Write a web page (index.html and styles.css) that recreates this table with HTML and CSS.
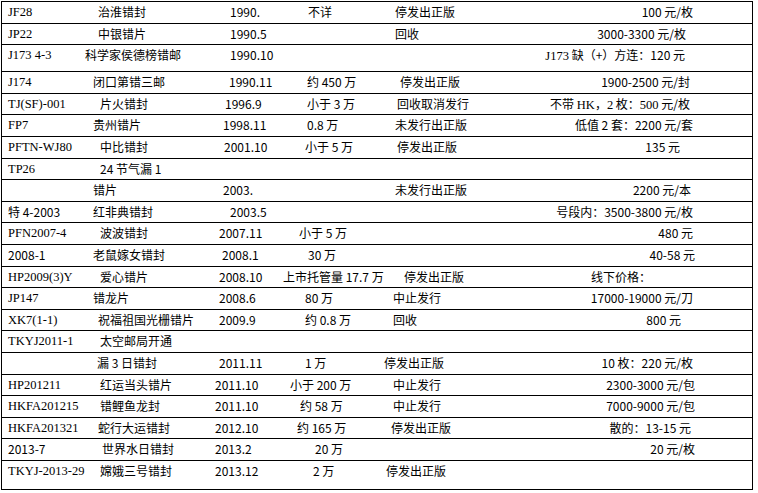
FILE: index.html
```html
<!DOCTYPE html>
<html lang="zh-CN">
<head>
<meta charset="utf-8">
<title>错票一览</title>
<link rel="stylesheet" href="styles.css">
</head>
<body>
<div class="sheet">
  <div class="row">
    <div class="cell c1 serif">JF28</div><div class="cell in14">治淮错封</div><div class="cell in16">1990.</div><div class="cell in26">不详</div><div class="cell in15">停发出正版</div><div class="cell price">100 元/枚</div>
  </div>
  <div class="row">
    <div class="cell c1 serif">JP22</div><div class="cell in14">中银错片</div><div class="cell in16">1990.5</div><div class="cell"></div><div class="cell in15">回收</div><div class="cell price pr66">3000-3300 元/枚</div>
  </div>
  <div class="row tall">
    <div class="cell c1 serif">J173 4-3</div><div class="cell in1">科学家侯德榜错邮</div><div class="cell in16">1990.10</div><div class="cell"></div><div class="cell"></div><div class="cell price pr67"><span class="serif">J173</span> 缺（+）方连：120 元</div>
  </div>
  <div class="row">
    <div class="cell c1 serif">J174</div><div class="cell in9">闭口第错三邮</div><div class="cell in15">1990.11</div><div class="cell in25">约 450 万</div><div class="cell in20">停发出正版</div><div class="cell price pr62">1900-2500 元/封</div>
  </div>
  <div class="row">
    <div class="cell c1 serif">TJ(SF)-001</div><div class="cell in16">片火错封</div><div class="cell in11">1996.9</div><div class="cell in25">小于 3 万</div><div class="cell in17">回收取消发行</div><div class="cell price pr62">不带 <span class="serif">HK</span>，<span class="serif">2</span> 枚：<span class="serif">500</span> 元/枚</div>
  </div>
  <div class="row">
    <div class="cell c1 serif">FP7</div><div class="cell in9">贵州错片</div><div class="cell in9">1998.11</div><div class="cell in25">0.8 万</div><div class="cell in15">未发行出正版</div><div class="cell price">低值 2 套：2200 元/套</div>
  </div>
  <div class="row">
    <div class="cell c1 serif">PFTN-WJ80</div><div class="cell in16">中比错封</div><div class="cell in10">2001.10</div><div class="cell in23">小于 5 万</div><div class="cell in17">停发出正版</div><div class="cell price pr72">135 元</div>
  </div>
  <div class="row">
    <div class="cell c1 serif">TP26</div><div class="cell in16">24 节气漏 1</div><div class="cell"></div><div class="cell"></div><div class="cell"></div><div class="cell"></div>
  </div>
  <div class="row">
    <div class="cell c1"></div><div class="cell in9">错片</div><div class="cell in9">2003.</div><div class="cell"></div><div class="cell in15">未发行出正版</div><div class="cell price pr61">2200 元/本</div>
  </div>
  <div class="row">
    <div class="cell c1">特 4-2003</div><div class="cell in9">红非典错封</div><div class="cell in16">2003.5</div><div class="cell"></div><div class="cell"></div><div class="cell price">号段内：3500-3800 元/枚</div>
  </div>
  <div class="row">
    <div class="cell c1 serif">PFN2007-4</div><div class="cell in16">波波错封</div><div class="cell in5">2007.11</div><div class="cell in17">小于 5 万</div><div class="cell"></div><div class="cell price">480 元</div>
  </div>
  <div class="row">
    <div class="cell c1">2008-1</div><div class="cell in9">老鼠嫁女错封</div><div class="cell in8">2008.1</div><div class="cell in26">30 万</div><div class="cell"></div><div class="cell price pr57">40-58 元</div>
  </div>
  <div class="row">
    <div class="cell c1 serif">HP2009(3)Y</div><div class="cell in16">爱心错片</div><div class="cell in5">2008.10</div><div class="cell in1">上市托管量 17.7 万</div><div class="cell in24">停发出正版</div><div class="cell note">线下价格：</div>
  </div>
  <div class="row">
    <div class="cell c1 serif">JP147</div><div class="cell in9">错龙片</div><div class="cell in5">2008.6</div><div class="cell in23">80 万</div><div class="cell in13">中止发行</div><div class="cell price">17000-19000 元/刀</div>
  </div>
  <div class="row">
    <div class="cell c1 serif">XK7(1-1)</div><div class="cell in14">祝福祖国光栅错片</div><div class="cell in5">2009.9</div><div class="cell in23">约 0.8 万</div><div class="cell in13">回收</div><div class="cell price pr71">800 元</div>
  </div>
  <div class="row">
    <div class="cell c1 serif">TKYJ2011-1</div><div class="cell in16">太空邮局开通</div><div class="cell"></div><div class="cell"></div><div class="cell"></div><div class="cell"></div>
  </div>
  <div class="row">
    <div class="cell c1"></div><div class="cell in13">漏 3 日错封</div><div class="cell in5">2011.11</div><div class="cell in23">1 万</div><div class="cell in4">停发出正版</div><div class="cell price">10 枚：220 元/枚</div>
  </div>
  <div class="row">
    <div class="cell c1 serif">HP201211</div><div class="cell in16">红运当头错片</div><div class="cell in1">2011.10</div><div class="cell in8">小于 200 万</div><div class="cell in13">中止发行</div><div class="cell price pr57">2300-3000 元/包</div>
  </div>
  <div class="row">
    <div class="cell c1 serif">HKFA201215</div><div class="cell in16">错鲤鱼龙封</div><div class="cell in1">2011.10</div><div class="cell in18">约 58 万</div><div class="cell in13">中止发行</div><div class="cell price pr57">7000-9000 元/包</div>
  </div>
  <div class="row">
    <div class="cell c1 serif">HKFA201321</div><div class="cell in14">蛇行大运错封</div><div class="cell in1">2012.10</div><div class="cell in15">约 165 万</div><div class="cell in11">停发出正版</div><div class="cell price pr61">散的：13-15 元</div>
  </div>
  <div class="row">
    <div class="cell c1">2013-7</div><div class="cell in18">世界水日错封</div><div class="cell in1">2013.2</div><div class="cell in33">20 万</div><div class="cell"></div><div class="cell price pr57">20 元/枚</div>
  </div>
  <div class="row last">
    <div class="cell c1 serif">TKYJ-2013-29</div><div class="cell in16">嫦娥三号错封</div><div class="cell in1">2013.12</div><div class="cell in31">2 万</div><div class="cell in6">停发出正版</div><div class="cell"></div>
  </div>
</div>
</body>
</html>
```
FILE: styles.css
```css
html, body {
  margin: 0;
  padding: 0;
  background: #fff;
}

body {
  font-family: "Noto Sans CJK SC", "Noto Sans CJK JP", sans-serif;
  font-size: 12px;
  color: #000;
}

.sheet {
  box-sizing: border-box;
  margin: 1px 0 0 1px;
  width: 752px;
  border: 1px solid #000;
  border-bottom: none;
}

.row {
  box-sizing: border-box;
  display: grid;
  grid-template-columns: 82px 130px 68px 98px 100px minmax(0, 1fr);
  align-items: start;
  height: 21.6px;
  border-bottom: 1px solid #000;
}

.row.tall {
  height: 27px;
}

.row.last {
  height: 29px;
}

.cell {
  line-height: 20.6px;
  white-space: nowrap;
  min-width: 0;
}

.serif {
  font-family: "Liberation Serif", "Noto Sans CJK SC", serif;
  font-size: 12.5px;
}

.c1 { padding-left: 6px; }

.price {
  text-align: right;
  padding-right: 59px;
}

.note { padding-left: 111px; }

.in1 { padding-left: 1px; }
.in4 { padding-left: 4px; }
.in5 { padding-left: 5px; }
.in6 { padding-left: 6px; }
.in8 { padding-left: 8px; }
.in9 { padding-left: 9px; }
.in10 { padding-left: 10px; }
.in11 { padding-left: 11px; }
.in13 { padding-left: 13px; }
.in14 { padding-left: 14px; }
.in15 { padding-left: 15px; }
.in16 { padding-left: 16px; }
.in17 { padding-left: 17px; }
.in18 { padding-left: 18px; }
.in20 { padding-left: 20px; }
.in23 { padding-left: 23px; }
.in24 { padding-left: 24px; }
.in25 { padding-left: 25px; }
.in26 { padding-left: 26px; }
.in31 { padding-left: 31px; }
.in33 { padding-left: 33px; }

.pr57 { padding-right: 57px; }
.pr61 { padding-right: 61px; }
.pr62 { padding-right: 62px; }
.pr66 { padding-right: 66px; }
.pr67 { padding-right: 67px; }
.pr71 { padding-right: 71px; }
.pr72 { padding-right: 72px; }
```
